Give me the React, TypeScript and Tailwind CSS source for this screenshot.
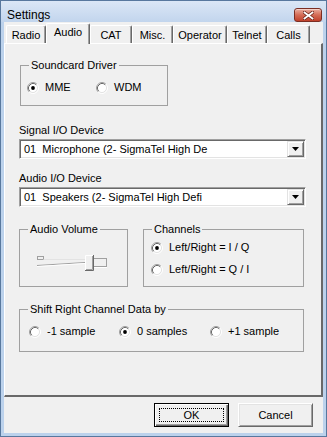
import type { ReactNode } from 'react';

const TABS = [
  { name: 'Radio', w: 'w-[40px]' },
  { name: 'Audio', w: 'w-[44px]', active: true },
  { name: 'CAT', w: 'w-[42px]' },
  { name: 'Misc.', w: 'w-[41px]' },
  { name: 'Operator', w: 'w-[54px]' },
  { name: 'Telnet', w: 'w-[40px]' },
  { name: 'Calls', w: 'w-[43px]' },
];

function RadioDot({ checked }: { checked?: boolean }) {
  return (
    <svg width="12" height="12" viewBox="0 0 12 12" className="shrink-0">
      <circle cx="6" cy="6" r="4.5" fill="#fff" />
      <path d="M2.11 9.89 A5.5 5.5 0 0 1 9.89 2.11" fill="none" stroke="#a0a0a0" />
      <path d="M9.89 2.11 A5.5 5.5 0 0 1 2.11 9.89" fill="none" stroke="#fff" />
      <path d="M2.82 9.18 A4.5 4.5 0 0 1 9.18 2.82" fill="none" stroke="#696969" />
      <path d="M9.18 2.82 A4.5 4.5 0 0 1 2.82 9.18" fill="none" stroke="#e3e3e3" />
      {checked && <circle cx="6" cy="6" r="1.9" fill="#000" />}
    </svg>
  );
}

function Option({ label, checked, className = '' }: { label: string; checked?: boolean; className?: string }) {
  return (
    <div className={`flex items-center gap-[6px] h-[13px] ${className}`}>
      <RadioDot checked={checked} />
      <span className="leading-[13px] whitespace-pre">{label}</span>
    </div>
  );
}

function GroupBox({ title, className = '', children }: { title: string; className?: string; children?: ReactNode }) {
  return (
    <div className={`relative border border-[#a0a0a0] ${className}`}>
      <span className="absolute left-[8px] -top-[7px] px-[2px] bg-[#f0f0f0] leading-[13px] whitespace-pre">{title}</span>
      {children}
    </div>
  );
}

function Combo({ value }: { value: string }) {
  return (
    <div className="flex w-[287px] h-[20px] bg-white border border-t-[#a0a0a0] border-l-[#a0a0a0] border-b-white border-r-white shadow-[inset_1px_1px_0_#696969,inset_-1px_-1px_0_#e3e3e3] p-px">
      <span className="flex-1 pl-[3px] leading-[16px] whitespace-pre">{value}</span>
      <div className="w-[17px] h-[16px] flex items-center justify-center bg-[#f0f0f0] border border-t-[#e3e3e3] border-l-[#e3e3e3] border-b-[#696969] border-r-[#696969] shadow-[inset_1px_1px_0_#fff,inset_-1px_-1px_0_#a0a0a0]">
        <svg width="7" height="4" viewBox="0 0 7 4">
          <path d="M0 0 H7 L3.5 4 Z" fill="#000" />
        </svg>
      </div>
    </div>
  );
}

function Slider() {
  // disabled-looking trackbar drawing
  return (
    <svg width="74" height="17" viewBox="0 0 74 17" className="ml-[16px] mt-[24px]">
      <rect x="1.5" y="2.5" width="6" height="3" fill="none" stroke="#a0a0a0" />
      <path d="M1 11.5 L49 8.5" stroke="#a0a0a0" />
      <path d="M1 12.5 L49 9.5" stroke="#fff" />
      <path d="M7.5 5.5 L49 5.5" stroke="#e3e3e3" />
      <rect x="57.5" y="4.5" width="13" height="8" fill="none" stroke="#a0a0a0" />
      <path d="M58 13.5 H71" stroke="#fff" />
      <rect x="49" y="1" width="9" height="16" fill="#f0f0f0" />
      <path d="M49.5 16 V1.5 H57" fill="none" stroke="#fff" />
      <path d="M49 16.5 H57.5 V1" fill="none" stroke="#696969" />
      <path d="M50 15.5 H56.5 V2" fill="none" stroke="#a0a0a0" />
    </svg>
  );
}

function CloseButton() {
  return (
    <div className="mt-[7px] w-[28px] h-[14px] rounded-[3px] border border-[#7b2e23] bg-gradient-to-b from-[#e9ad9f] via-[#d46b55] to-[#c0402a] flex items-center justify-center shadow-[inset_0_1px_0_#f4cfc6]">
      <svg width="11" height="9" viewBox="0 0 11 9">
        <path d="M1.5 1.5 L9.5 7.5 M9.5 1.5 L1.5 7.5" stroke="#6a2418" strokeWidth="3.4" strokeLinecap="square" />
        <path d="M1.5 1.5 L9.5 7.5 M9.5 1.5 L1.5 7.5" stroke="#fff" strokeWidth="1.8" strokeLinecap="square" />
      </svg>
    </div>
  );
}

export default function App() {
  return (
    <div className="w-[327px] h-[437px] flex flex-col bg-[#bcd2ec] border border-[#58789e] font-['Liberation_Sans',Arial,sans-serif] text-[11px] text-black">
      {/* Title bar */}
      <div className="h-[21px] flex items-start bg-gradient-to-b from-[#dbe7f6] to-[#c2d5ed] pl-[6px] pr-[4px]">
        <span className="flex-1 text-[12px] leading-[14px] mt-[7px]">Settings</span>
        <CloseButton />
      </div>

      {/* Client area */}
      <div className="flex-1 mx-[3px] mb-[3px] bg-[#f0f0f0] flex flex-col">
        {/* Tabs */}
        <div className="h-[21px] flex items-end pl-[2px]">
          {TABS.map((t) =>
            t.active ? (
              <div
                key={t.name}
                className={`${t.w} h-[21px] -mb-px relative z-10 bg-[#f0f0f0] border-t border-l border-white border-r border-r-[#696969] rounded-t-[2px] shadow-[inset_-1px_0_0_#a0a0a0] pt-[1px] text-center leading-[14px]`}
              >
                {t.name}
              </div>
            ) : (
              <div
                key={t.name}
                className={`${t.w} h-[18px] bg-[#f0f0f0] border-t border-l border-white border-r border-r-[#696969] rounded-t-[2px] shadow-[inset_-1px_0_0_#a0a0a0] pt-[2px] text-center leading-[14px]`}
              >
                {t.name}
              </div>
            )
          )}
        </div>

        {/* Tab page */}
        <div className="h-[354px] flex flex-col border-t border-l border-white border-r-2 border-b-2 border-r-[#696969] border-b-[#696969] pl-[14px]">
          <GroupBox title="Soundcard Driver" className="mt-[21px] ml-px w-[148px] h-[41px]">
            <div className="flex mt-[15px] pl-[6px]">
              <Option label="MME" checked className="w-[69px]" />
              <Option label="WDM" />
            </div>
          </GroupBox>

          <div className="mt-[18px] h-[13px] leading-[13px]">Signal I/O Device</div>
          <div className="mt-[2px]">
            <Combo value="01  Microphone (2- SigmaTel High De" />
          </div>

          <div className="mt-[13px] h-[13px] leading-[13px]">Audio I/O Device</div>
          <div className="mt-[2px]">
            <Combo value="01  Speakers (2- SigmaTel High Defi" />
          </div>

          <div className="flex gap-[15px] mt-[22px]">
            <GroupBox title="Audio Volume" className="w-[109px] h-[58px]">
              <Slider />
            </GroupBox>
            <GroupBox title="Channels" className="w-[161px] h-[58px] pl-[7px]">
              <Option label="Left/Right = I / Q" checked className="mt-[11px]" />
              <Option label="Left/Right = Q / I" className="mt-[9px]" />
            </GroupBox>
          </div>

          <GroupBox title="Shift Right Channel Data by" className="mt-[22px] w-[285px] h-[43px]">
            <div className="flex mt-[15px] pl-[9px]">
              <Option label="-1 sample" className="w-[90px]" />
              <Option label="0 samples" checked className="w-[91px]" />
              <Option label="+1 sample" />
            </div>
          </GroupBox>
        </div>

        {/* Dialog buttons */}
        <div className="flex-1 flex justify-end items-start gap-[9px] pt-[6px] pr-[10px]">
          <button className="relative w-[75px] h-[24px] bg-[#f0f0f0] border border-black shadow-[inset_1px_1px_0_#fff,inset_-1px_-1px_0_#696969,inset_-2px_-2px_0_#a0a0a0] leading-[13px]">
            <span className="absolute inset-[4px] border border-dotted border-black" />
            OK
          </button>
          <button className="w-[75px] h-[24px] bg-[#f0f0f0] border border-t-white border-l-white border-b-[#696969] border-r-[#696969] shadow-[inset_1px_1px_0_#e3e3e3,inset_-1px_-1px_0_#a0a0a0] leading-[13px]">
            Cancel
          </button>
        </div>
      </div>
    </div>
  );
}
